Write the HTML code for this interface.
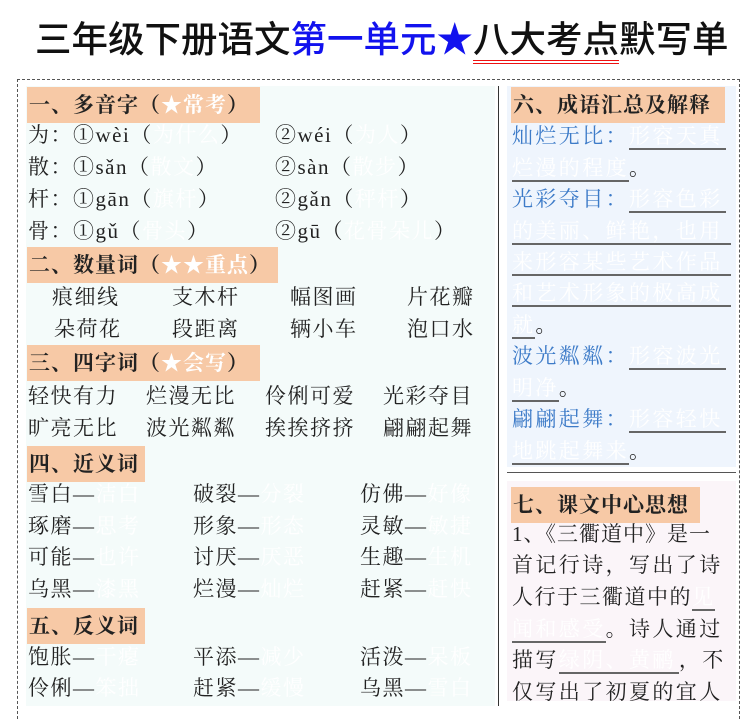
<!DOCTYPE html>
<html><head><meta charset="utf-8"><style>
*{margin:0;padding:0;box-sizing:border-box}
body{width:755px;height:694px;overflow:hidden;background:#fff;position:relative;font-family:"Liberation Serif","Noto Serif CJK SC",serif;color:#222}
.t{position:absolute;white-space:nowrap;font-size:21px;line-height:24px;letter-spacing:1.5px}
.r{letter-spacing:2.4px}
.h{position:absolute;background:#f7c9a6;font-weight:bold;font-size:21px;line-height:24px;padding:6px 2px 6px 2px;white-space:nowrap;color:#222;letter-spacing:1px}
.w{color:#fff}
.b{color:#3d7bc8}
.u{border-bottom:2px solid #666}
</style></head><body>
<div class="t" style="left:35px;top:19px;font-family:'Liberation Sans','Noto Sans CJK SC',sans-serif;font-size:36.5px;line-height:42px;letter-spacing:0;color:#111;font-weight:500">三年级下册语文<span style="color:#1212ee">第一单元★</span><span style="border-bottom:4px double #e11">八大考点</span>默写单</div>
<div style="position:absolute;left:17px;top:79px;width:723px;height:640px;border:1px dashed #555;border-bottom:none"></div>
<div style="position:absolute;left:26px;top:86px;width:469px;height:620px;background:#f4fbfa"></div>
<div style="position:absolute;left:498px;top:86px;width:1px;height:620px;background:#333"></div>
<div style="position:absolute;left:507px;top:86px;width:229px;height:381px;background:#eff5fd"></div>
<div style="position:absolute;left:507px;top:472px;width:229px;height:1px;background:#555"></div>
<div style="position:absolute;left:507px;top:481px;width:229px;height:220px;background:#fbf5f9"></div>

<div class="h" style="left:27px;top:87px;width:233px">一、多音字（<span class="w">★常考</span>）</div>
<div class="t" style="left:28px;top:123px">为：①wèi（<span class="w">为什么</span>）</div>
<div class="t" style="left:275px;top:123px">②wéi（<span class="w">为人</span>）</div>
<div class="t" style="left:28px;top:155px">散：①sǎn（<span class="w">散文</span>）</div>
<div class="t" style="left:275px;top:155px">②sàn（<span class="w">散步</span>）</div>
<div class="t" style="left:28px;top:187px">杆：①gān（<span class="w">旗杆</span>）</div>
<div class="t" style="left:275px;top:187px">②gǎn（<span class="w">秤杆</span>）</div>
<div class="t" style="left:28px;top:219px">骨：①gǔ（<span class="w">骨头</span>）</div>
<div class="t" style="left:275px;top:219px">②gū（<span class="w">花骨朵儿</span>）</div>

<div class="h" style="left:27px;top:247px;width:251px">二、数量词（<span class="w">★★重点</span>）</div>
<div class="t" style="left:52px;top:285px">痕细线</div>
<div class="t" style="left:172px;top:285px">支木杆</div>
<div class="t" style="left:290px;top:285px">幅图画</div>
<div class="t" style="left:407px;top:285px">片花瓣</div>
<div class="t" style="left:54px;top:317px">朵荷花</div>
<div class="t" style="left:172px;top:317px">段距离</div>
<div class="t" style="left:290px;top:317px">辆小车</div>
<div class="t" style="left:407px;top:317px">泡口水</div>

<div class="h" style="left:27px;top:345px;width:233px">三、四字词（<span class="w">★会写</span>）</div>
<div class="t" style="left:28px;top:384px">轻快有力</div>
<div class="t" style="left:146px;top:384px">烂漫无比</div>
<div class="t" style="left:265px;top:384px">伶俐可爱</div>
<div class="t" style="left:383px;top:384px">光彩夺目</div>
<div class="t" style="left:28px;top:416px">旷亮无比</div>
<div class="t" style="left:146px;top:416px">波光粼粼</div>
<div class="t" style="left:265px;top:416px">挨挨挤挤</div>
<div class="t" style="left:383px;top:416px">翩翩起舞</div>

<div class="h" style="left:27px;top:446px;width:118px">四、近义词</div>
<div class="t" style="left:28px;top:482px">雪白—<span class="w">洁白</span></div>
<div class="t" style="left:193px;top:482px">破裂—<span class="w">分裂</span></div>
<div class="t" style="left:360px;top:482px">仿佛—<span class="w">好像</span></div>
<div class="t" style="left:28px;top:514px">琢磨—<span class="w">思考</span></div>
<div class="t" style="left:193px;top:514px">形象—<span class="w">形态</span></div>
<div class="t" style="left:360px;top:514px">灵敏—<span class="w">敏捷</span></div>
<div class="t" style="left:28px;top:545px">可能—<span class="w">也许</span></div>
<div class="t" style="left:193px;top:545px">讨厌—<span class="w">厌恶</span></div>
<div class="t" style="left:360px;top:545px">生趣—<span class="w">生机</span></div>
<div class="t" style="left:28px;top:577px">乌黑—<span class="w">漆黑</span></div>
<div class="t" style="left:193px;top:577px">烂漫—<span class="w">灿烂</span></div>
<div class="t" style="left:360px;top:577px">赶紧—<span class="w">赶快</span></div>

<div class="h" style="left:27px;top:608px;width:118px">五、反义词</div>
<div class="t" style="left:28px;top:645px">饱胀—<span class="w">干瘪</span></div>
<div class="t" style="left:193px;top:645px">平添—<span class="w">减少</span></div>
<div class="t" style="left:360px;top:645px">活泼—<span class="w">呆板</span></div>
<div class="t" style="left:28px;top:676px">伶俐—<span class="w">笨拙</span></div>
<div class="t" style="left:193px;top:676px">赶紧—<span class="w">缓慢</span></div>
<div class="t" style="left:360px;top:676px">乌黑—<span class="w">雪白</span></div>

<div class="h" style="left:511px;top:87px;width:214px">六、成语汇总及解释</div>
<div class="t r b" style="left:512px;top:124px">灿烂无比：<span class="u w" style="display:inline-block;width:97px">形容天真</span></div>
<div class="t r" style="left:512px;top:156px"><span class="u w">烂漫的程度</span>。</div>
<div class="t r b" style="left:512px;top:187px">光彩夺目：<span class="u w" style="display:inline-block;width:97px">形容色彩</span></div>
<div class="t r" style="left:512px;top:219px"><span class="u w" style="display:inline-block;width:219px">的美丽、鲜艳，也用</span></div>
<div class="t r" style="left:512px;top:250px"><span class="u w" style="display:inline-block;width:219px">来形容某些艺术作品</span></div>
<div class="t r" style="left:512px;top:281px"><span class="u w" style="display:inline-block;width:219px">和艺术形象的极高成</span></div>
<div class="t r" style="left:512px;top:313px"><span class="u w">就</span>。</div>
<div class="t r b" style="left:512px;top:344px">波光粼粼：<span class="u w" style="display:inline-block;width:97px">形容波光</span></div>
<div class="t r" style="left:512px;top:376px"><span class="u w">明净</span>。</div>
<div class="t r b" style="left:512px;top:407px">翩翩起舞：<span class="u w" style="display:inline-block;width:97px">形容轻快</span></div>
<div class="t r" style="left:512px;top:439px"><span class="u w">地跳起舞来</span>。</div>

<div class="h" style="left:511px;top:487px;width:189px">七、课文中心思想</div>
<div class="t r" style="left:512px;top:522px;letter-spacing:1px">1、《三衢道中》是一</div>
<div class="t r" style="left:512px;top:553px">首记行诗，写出了诗</div>
<div class="t r" style="left:512px;top:585px;letter-spacing:1.5px">人行于三衢道中的<span class="u w">见</span></div>
<div class="t r" style="left:512px;top:617px"><span class="u w">闻和感受</span>。诗人通过</div>
<div class="t r" style="left:512px;top:648px">描写<span class="u w" style="display:inline-block;width:120px">绿阴、黄鹂</span>，不</div>
<div class="t r" style="left:512px;top:680px">仅写出了初夏的宜人</div>
</body></html>
